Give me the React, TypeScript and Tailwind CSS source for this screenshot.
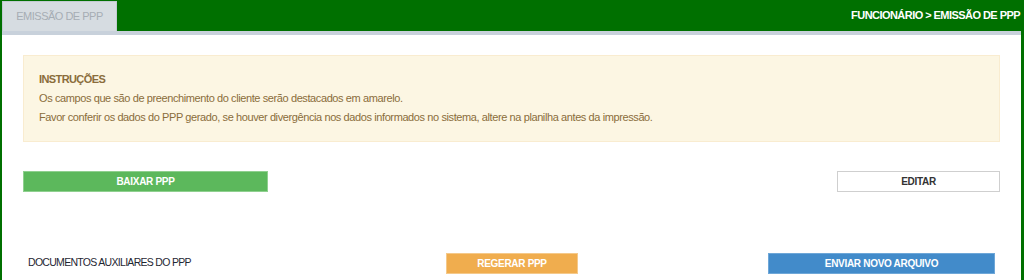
import React from "react";

export default function App() {
  const font = { fontFamily: '"Liberation Sans", Arial, sans-serif' };
  return (
    <div className="w-[1024px] h-[280px] bg-[#007000] pl-[2px] pr-[3px] flex flex-col overflow-hidden" style={font}>
      <div className="h-[31px] flex items-end justify-between shrink-0">
        <div className="w-[115px] h-[30px] bg-[#d6dce1] border border-[#c3cbd2] border-b-0 flex items-center justify-center text-[11px] tracking-[-0.5px] text-[#a6adb4]">
          EMISSÃO DE PPP
        </div>
        <div className="self-center text-white font-bold text-[11px] tracking-[-0.55px] pr-[1px] pb-[1px]">
          FUNCIONÁRIO &gt; EMISSÃO DE PPP
        </div>
      </div>
      <div className="flex-1 bg-white border-t-[4px] border-[#c8d1db] px-[21px] pt-[20px]">
        <div className="bg-[#fcf6e3] border border-[#f9ecd0] h-[87px] px-[15px] pt-[14px] text-[11px] tracking-[-0.4px] text-[#8a6d3b] leading-[19px]">
          <div className="font-bold tracking-[-0.6px]">INSTRUÇÕES</div>
          <div>Os campos que são de preenchimento do cliente serão destacados em amarelo.</div>
          <div>Favor conferir os dados do PPP gerado, se houver divergência nos dados informados no sistema, altere na planilha antes da impressão.</div>
        </div>
        <div className="flex justify-between mt-[29px]">
          <div className="w-[245px] h-[21px] bg-[#5cb85c] border border-[#8fd08f] flex items-center justify-center text-white font-bold text-[10px] tracking-[-0.3px]">
            BAIXAR PPP
          </div>
          <div className="w-[163px] h-[21px] bg-white border border-[#cfcfcf] flex items-center justify-center text-[#333] font-bold text-[10px] tracking-[-0.3px]">
            EDITAR
          </div>
        </div>
        <div className="flex items-start mt-[61px]">
          <div className="w-[423px] pl-[5px] pt-[2px] text-[10.5px] tracking-[-0.7px] text-[#1f2733]">DOCUMENTOS AUXILIARES DO PPP</div>
          <div className="w-[132px] h-[21px] bg-[#f0ad4e] border border-[#f5c98a] flex items-center justify-center text-white font-bold text-[10px] tracking-[-0.3px]">
            REGERAR PPP
          </div>
          <div className="flex-1" />
          <div className="w-[227px] h-[21px] bg-[#428bca] border border-[#6ea7d8] flex items-center justify-center text-white font-bold text-[10px] tracking-[-0.3px] mr-[5px]">
            ENVIAR NOVO ARQUIVO
          </div>
        </div>
      </div>
    </div>
  );
}
